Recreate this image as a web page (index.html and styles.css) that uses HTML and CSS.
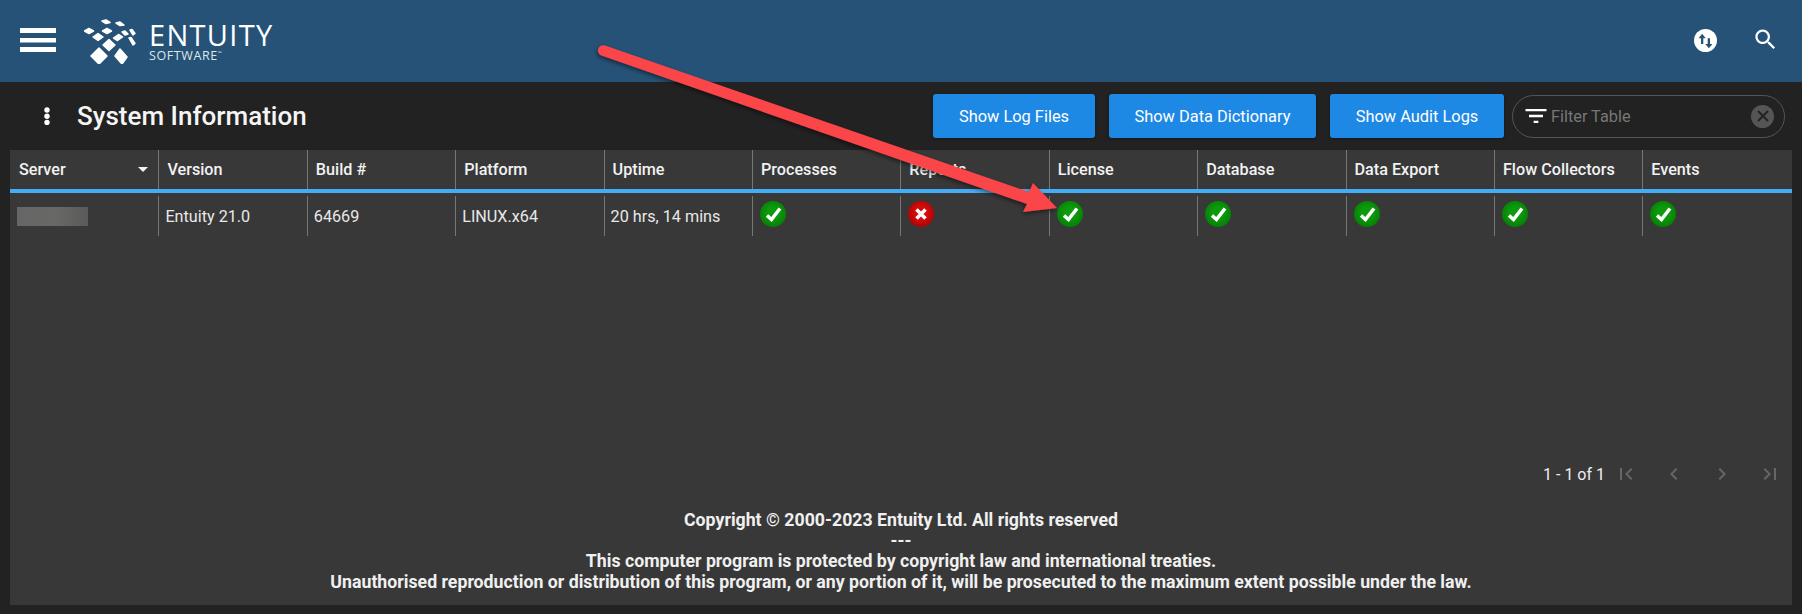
FILE: index.html
```html
<!DOCTYPE html>
<html lang="en">

<head>
    <meta charset="UTF-8">
    <title>System Information</title>
    <link rel="stylesheet" href="styles.css">
</head>

<body>
    <header class="topbar">
        <svg class="menu-icon" viewBox="0 0 36 24" width="36" height="24">
            <path d="M0 0h36v5H0zM0 10h36v4.500H0zM0 19h36v5H0z" fill="#fff" />
        </svg>
        <div class="logo">
            <!-- coordinates follow the page, so viewBox starts at the logo corner -->
            <svg class="logo-mark" viewBox="84 17 54 46" width="54" height="46">
                <path d="M91 55l8-8 8 8-8 8z" />
                <path d="M115 55l5-7 7 8-5 7z" />
                <path d="M103 44l6-5.500 6 5.500-6 5.500z" />
                <path d="M93 36l5-3.500 5 3.500-5 3.500z" />
                <path d="M84.500 30l4.500-2.500 4.500 2.500-4.500 2.500z" />
                <path d="M102.500 30l4.500-2.500 4.500 2.500-4.500 2.500z" />
                <path d="M113.500 37l5-3.500 4 2.500-5 3.500z" />
                <path d="M122 31l3-1 3 3-3 1z" />
                <path d="M129 37l2-.5 4 6-2 1.500z" />
                <path d="M130 29l2-.5 3 4-2 1.500z" />
                <path d="M102 20l4-1 4 2.500-4 1z" />
                <path d="M116 22l4-1 4 3-4 .5z" />
            </svg>
            <div class="logo-text">
                <span class="logo-name">ENTUITY</span>
                <span class="logo-sub">SOFTWARE<sup>™</sup></span>
            </div>
        </div>
        <div class="topbar-icons">
            <span class="swap-icon">
                <svg viewBox="0 0 24 24" width="24" height="24">
                    <path d="M8.500 4.500L4.800 9h2.500v6h2.400V9h2.500zM15.500 19.500l3.700-4.500h-2.500V9h-2.400v6h-2.500z" fill="#265277" />
                </svg>
            </span>
            <svg class="search-icon" viewBox="0 0 24 24" width="27" height="27">
                <path d="M15.500 14h-.79l-.28-.27C15.410 12.590 16 11.110 16 9.500 16 5.910 13.090 3 9.500 3S3 5.910 3 9.500 5.910 16 9.500 16c1.610 0 3.090-.59 4.230-1.570l.27.28v.79l5 4.990L20.490 19l-4.990-5zm-6 0C7.010 14 5 11.990 5 9.500S7.010 5 9.500 5 14 7.010 14 9.500 11.990 14 9.500 14z" fill="#fff" />
            </svg>
        </div>
    </header>

    <div class="toolbar">
        <svg class="kebab" viewBox="0 0 6 18" width="6" height="18" fill="#fff">
            <circle cx="3" cy="3" r="2.700" />
            <circle cx="3" cy="9.300" r="2.700" />
            <circle cx="3" cy="15.500" r="2.700" />
        </svg>
        <h1 class="title">System Information</h1>
        <div class="actions">
            <button class="action-btn btn-log">Show Log Files</button>
            <button class="action-btn btn-dict">Show Data Dictionary</button>
            <button class="action-btn btn-audit">Show Audit Logs</button>
            <div class="filter">
                <svg viewBox="0 0 24 24" width="28" height="28">
                    <path d="M10 18h4v-2h-4v2zM3 6v2h18V6H3zm3 7h12v-2H6v2z" fill="#fff" />
                </svg>
                <span class="filter-text">Filter Table</span>
                <span class="filter-clear">
                    <svg viewBox="0 0 14 14" width="14" height="14">
                        <path d="M2 2l10 10M12 2L2 12" stroke="#232323" stroke-width="2" fill="none" />
                    </svg>
                </span>
            </div>
        </div>
    </div>

    <main class="panel">
        <div class="table-head">
            <div class="th th-sort">Server <span class="sort-caret"></span></div>
            <div class="th">Version</div>
            <div class="th">Build #</div>
            <div class="th">Platform</div>
            <div class="th">Uptime</div>
            <div class="th">Processes</div>
            <div class="th">Reports</div>
            <div class="th">License</div>
            <div class="th">Database</div>
            <div class="th">Data Export</div>
            <div class="th">Flow Collectors</div>
            <div class="th">Events</div>
        </div>
        <div class="table-row">
            <div class="td td-server"><span class="blurred"></span></div>
            <div class="td">Entuity 21.0</div>
            <div class="td">64669</div>
            <div class="td">LINUX.x64</div>
            <div class="td">20 hrs, 14 mins</div>
            <div class="td"><span class="status ok"><svg viewBox="0 0 26 26" width="26" height="26"><path d="M7 14.500l4.500 4L20 7.500" /></svg></span></div>
            <div class="td"><span class="status bad"><svg viewBox="0 0 26 26" width="26" height="26"><path d="M8.500 8.500l9 9M17.500 8.500l-9 9" /></svg></span></div>
            <div class="td"><span class="status ok"><svg viewBox="0 0 26 26" width="26" height="26"><path d="M7 14.500l4.500 4L20 7.500" /></svg></span></div>
            <div class="td"><span class="status ok"><svg viewBox="0 0 26 26" width="26" height="26"><path d="M7 14.500l4.500 4L20 7.500" /></svg></span></div>
            <div class="td"><span class="status ok"><svg viewBox="0 0 26 26" width="26" height="26"><path d="M7 14.500l4.500 4L20 7.500" /></svg></span></div>
            <div class="td"><span class="status ok"><svg viewBox="0 0 26 26" width="26" height="26"><path d="M7 14.500l4.500 4L20 7.500" /></svg></span></div>
            <div class="td"><span class="status ok"><svg viewBox="0 0 26 26" width="26" height="26"><path d="M7 14.500l4.500 4L20 7.500" /></svg></span></div>
        </div>

        <div class="pagination">
            <span class="page-info">1 - 1 of 1</span>
            <svg viewBox="0 0 24 24" width="24" height="24"><path d="M18.410 16.590L13.820 12l4.590-4.590L17 6l-6 6 6 6zM6 6h2v12H6z" /></svg>
            <svg viewBox="0 0 24 24" width="24" height="24"><path d="M15.410 7.410L14 6l-6 6 6 6 1.410-1.410L10.830 12z" /></svg>
            <svg viewBox="0 0 24 24" width="24" height="24"><path d="M10 6L8.590 7.410 13.170 12l-4.580 4.590L10 18l6-6z" /></svg>
            <svg viewBox="0 0 24 24" width="24" height="24"><path d="M5.590 7.410L10.180 12l-4.590 4.590L7 18l6-6-6-6zM16 6h2v12h-2z" /></svg>
        </div>

        <footer class="legal">
            <div>Copyright © 2000-2023 Entuity Ltd. All rights reserved</div>
            <div>---</div>
            <div>This computer program is protected by copyright law and international treaties.</div>
            <div>Unauthorised reproduction or distribution of this program, or any portion of it, will be prosecuted to the maximum extent possible under the law.</div>
        </footer>
    </main>

    <!-- annotation drawn over the screenshot -->
    <svg class="arrow" viewBox="0 0 1802 614" width="1802" height="614">
        <defs>
            <filter id="arrowShadow" x="-5%" y="-20%" width="110%" height="140%">
                <feDropShadow dx="-1" dy="2" stdDeviation="2" flood-color="#000" flood-opacity="0.5" />
            </filter>
        </defs>
        <path d="M605 45.500L1029 192l4-9 24 25-34 4 4-8L601.500 55.500A5.200 5.200 0 0 1 605 45.500z" fill="#fa4549" filter="url(#arrowShadow)" />
    </svg>
</body>

</html>
```

FILE: styles.css
```css
* {
    box-sizing: border-box;
}

html,
body {
    height: 100%;
}

body {
    margin: 0;
    display: flex;
    flex-direction: column;
    position: relative;
    overflow: hidden;
    background-color: #222;
    color: #f2f2f2;
    font-family: Roboto, Arial, sans-serif;
}

.topbar {
    height: 82px;
    flex: none;
    display: flex;
    align-items: center;
    padding-left: 20px;
    background-color: #265277;
}

.menu-icon {
    margin-top: -2px;
}

.logo {
    display: flex;
    align-items: flex-start;
    margin-left: 28px;
    gap: 11px;
}

.logo-mark {
    fill: #fff;
    stroke: #fff;
    stroke-width: 1.5;
    stroke-linejoin: round;
}

.logo-text {
    display: flex;
    flex-direction: column;
    color: #fff;
    margin-top: 2px;
}

.logo-name {
    font-family: "Open Sans", sans-serif;
    font-size: 29px;
    line-height: 29px;
    letter-spacing: 1.300px;
}

.logo-sub {
    font-family: "Open Sans", sans-serif;
    font-size: 12.500px;
    line-height: 14px;
    letter-spacing: 0.600px;
    color: #dfe6ec;
}

.logo-sub sup {
    font-size: 5px;
    line-height: 0;
}

.topbar-icons {
    margin-left: auto;
    display: flex;
    align-items: center;
    gap: 35px;
    padding-right: 23px;
}

.swap-icon {
    width: 23px;
    height: 23px;
    margin-top: -1px;
    border-radius: 50%;
    background-color: #fff;
    display: flex;
    align-items: center;
    justify-content: center;
}

.search-icon {
    margin-top: -4px;
}

.toolbar {
    height: 68px;
    flex: none;
    display: flex;
    align-items: center;
    padding-left: 44px;
}

.kebab {
    flex: none;
}

.title {
    margin: 0 0 0 27px;
    font-size: 26px;
    font-weight: 500;
    color: #f5f5f5;
}

.actions {
    margin-left: auto;
    display: flex;
    align-items: center;
    padding-right: 17px;
}

.action-btn {
    height: 44px;
    padding: 0;
    border: none;
    border-radius: 3px;
    background-color: #1e88e5;
    color: #fff;
    font-family: inherit;
    font-size: 16.400px;
    box-shadow: 0 1px 3px rgba(0, 0, 0, 0.4);
}

.btn-log {
    width: 162px;
}

.btn-dict {
    width: 207px;
    margin-left: 14px;
}

.btn-audit {
    width: 174px;
    margin-left: 14px;
}

.filter {
    width: 273px;
    height: 43px;
    margin-left: 8px;
    padding: 0 10px 0 9px;
    display: flex;
    align-items: center;
    border: 1px solid #555;
    border-radius: 22px;
}

.filter-text {
    margin-left: 1px;
    font-size: 16.300px;
    color: #777;
}

.filter-clear {
    width: 23px;
    height: 23px;
    margin-left: auto;
    border-radius: 50%;
    background-color: #555;
    display: flex;
    align-items: center;
    justify-content: center;
}

.panel {
    flex: 1;
    margin: 0 10px 9px;
    display: flex;
    flex-direction: column;
    background-color: #383838;
}

.table-head,
.table-row {
    display: grid;
    grid-template-columns: repeat(12, 148.400px);
}

.table-head {
    height: 43px;
    border-bottom: 4px solid #45adf7;
}

.th {
    padding-left: 8px;
    display: flex;
    align-items: center;
    font-size: 16.200px;
    font-weight: 500;
    color: #f2f2f2;
    border-left: 1px solid #777;
}

.th:first-child {
    border-left: none;
    padding-left: 9px;
}

.th-sort {
    justify-content: space-between;
    padding-right: 10px;
}

.sort-caret {
    width: 0;
    height: 0;
    border-left: 5px solid transparent;
    border-right: 5px solid transparent;
    border-top: 5px solid #f2f2f2;
}

.table-row {
    height: 40px;
    margin-top: 3px;
}

.td {
    padding-left: 6px;
    display: flex;
    align-items: center;
    font-size: 16.200px;
    color: #e8e8e8;
    border-left: 1px solid #777;
}

.td:first-child {
    border-left: none;
    padding-left: 7px;
}

.blurred {
    width: 71px;
    height: 19px;
    background: linear-gradient(90deg, #666 0%, #686866 55%, #5a5a5a 100%);
}

.status {
    width: 26px;
    height: 26px;
    margin-top: -4px;
    margin-left: 1px;
    border-radius: 50%;
}

.status svg {
    display: block;
}

.status path {
    fill: none;
    stroke: #fff;
    stroke-width: 3.500;
}

.status.ok {
    background: radial-gradient(circle at 50% 45%, #0d9a0d 30%, #006f00 100%);
}

.status.bad {
    background: radial-gradient(circle at 50% 45%, #d80c0c 30%, #8f0000 100%);
}

.pagination {
    margin-top: 226px;
    padding-right: 10px;
    display: flex;
    align-items: center;
    justify-content: flex-end;
    gap: 24px;
}

.pagination svg {
    fill: #666;
}

.page-info {
    margin-right: -15px;
    font-size: 16px;
    color: #eee;
}

.legal {
    margin-top: 24px;
    text-align: center;
    font-size: 17.730px;
    font-weight: 700;
    line-height: 20.500px;
    color: #f0f0f0;
}

.arrow {
    position: absolute;
    top: 0;
    left: 0;
    pointer-events: none;
}
```
